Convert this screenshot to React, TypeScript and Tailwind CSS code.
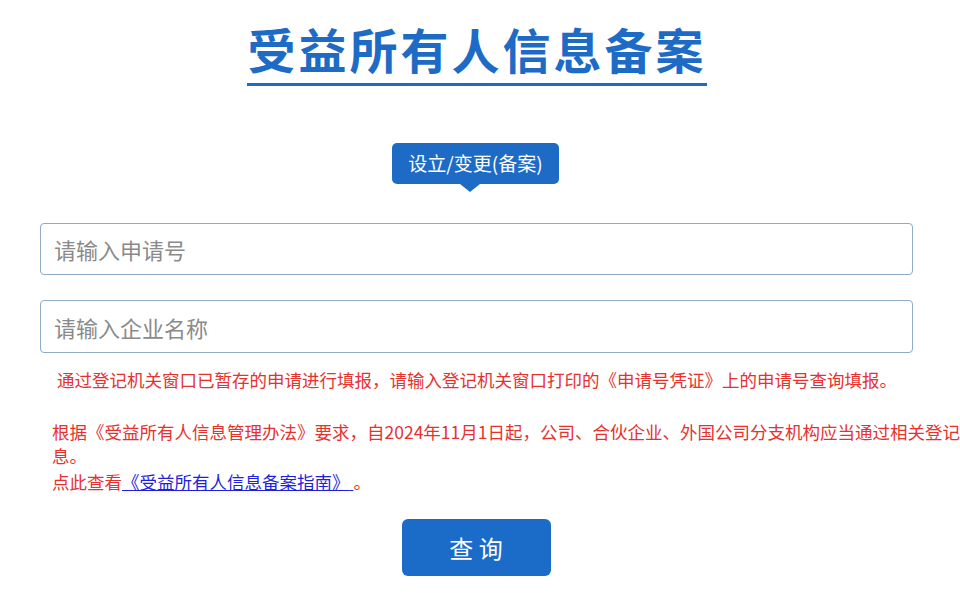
export default function App() {
  const font = "font-['Microsoft_YaHei','Noto_Sans_CJK_SC',sans-serif]";

  return (
    <div className={`w-[960px] h-[598px] overflow-hidden bg-white ${font}`}>
      {/* Title */}
      <div className="flex justify-center">
        <h1 className="mt-[24px] ml-[-6px] pb-[11px] border-b-[3px] border-[#1e6bc6] text-[48px] leading-[48px] font-bold tracking-[3px] text-[#1e6bc6]">
          受益所有人信息备案
        </h1>
      </div>

      {/* Tab badge */}
      <div className="flex justify-center mt-[57px] ml-[-9px]">
        <div className="relative">
          <div className="h-[41px] w-[167px] rounded-[5px] bg-[#1e6bc6] text-white text-[19px] flex items-center justify-center">
            设立/变更(备案)
          </div>
          <div className="absolute left-[68px] top-full w-0 h-0 border-l-[10px] border-r-[10px] border-t-[8px] border-l-transparent border-r-transparent border-t-[#1e6bc6]" />
        </div>
      </div>

      {/* Inputs */}
      <div className="mt-[39px] pl-[40px] w-[913px] flex flex-col gap-[25px]">
        <input
          className="h-[52px] w-full border border-[#8fabc8] rounded-[4px] px-[13px] text-[22px] text-[#333] placeholder:text-[#8a8a8a] outline-none"
          placeholder="请输入申请号"
        />
        <input
          className="h-[53px] w-full border border-[#8fabc8] rounded-[4px] px-[13px] text-[22px] text-[#333] placeholder:text-[#8a8a8a] outline-none"
          placeholder="请输入企业名称"
        />
      </div>

      {/* Notes */}
      <p className="mt-[14px] pl-[57px] text-[17.5px] leading-[26px] text-[#e5322f] whitespace-nowrap">
        通过登记机关窗口已暂存的申请进行填报，请输入登记机关窗口打印的《申请号凭证》上的申请号查询填报。
      </p>

      <div className="mt-[27px] pl-[52px] text-[17.5px] leading-[24px] text-[#e5322f]">
        <p className="whitespace-nowrap">
          根据《受益所有人信息管理办法》要求，自2024年11月1日起，公司、合伙企业、外国公司分支机构应当通过相关登记注册系统备案受益所有人信
          <br />
          息。
        </p>
        <p className="mt-[2px] whitespace-nowrap">
          点此查看
          <a href="#" className="text-[#1f1fdc] underline">
            《受益所有人信息备案指南》{" "}
          </a>{" "}
          。
        </p>
      </div>

      {/* Submit */}
      <div className="flex justify-center mt-[25px] ml-[-8px]">
        <button className="w-[149px] h-[57px] rounded-[6px] bg-[#1b6bc9] text-white text-[24px]">
          查 询
        </button>
      </div>
    </div>
  );
}
